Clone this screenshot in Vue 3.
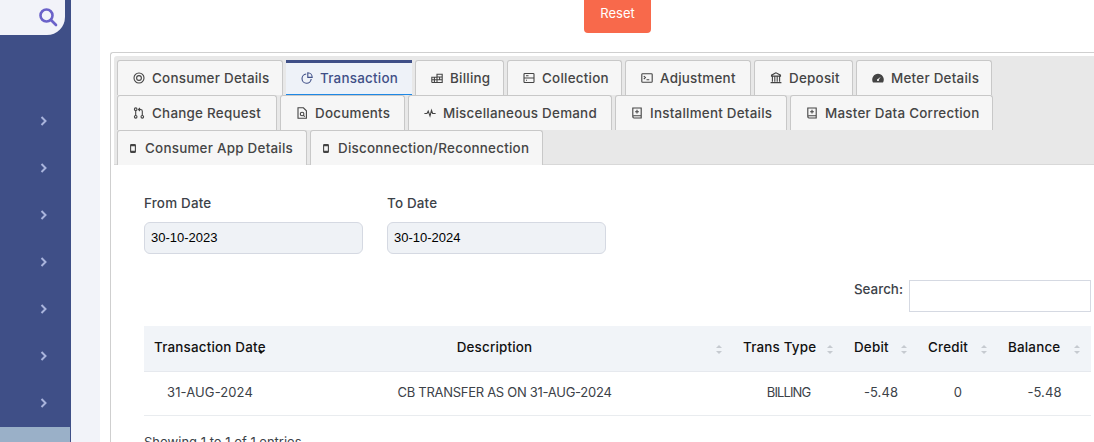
<script setup>
// tab rows, icon = key into the icons map below
const icons = {
  at: '<circle cx="6" cy="6" r="5"/><circle cx="6" cy="6" r="2.4"/>',
  pie: '<path d="M5.2 2a4.6 4.6 0 1 0 5 5"/><path d="M6.8 .8a4.6 4.6 0 0 1 4.4 4.6H6.8z"/>',
  chart: '<path d="M.8 10.5h10.4V2.2H6v8.3M.8 10.5V5.2H6M.8 7.8H6M3.4 5.2v5.3M6 5h5.2M6 7.8h5.2M8.6 5v2.8"/>',
  card: '<rect x="1" y="1.5" width="10" height="9" rx=".8"/><path d="M1 6h10M3 3.8h2.5M3 8.2h1"/>',
  term: '<rect x=".8" y="1.8" width="10.4" height="8.4" rx=".8"/><path d="M2.8 4.2l1.6 1.4-1.6 1.4M5.5 7.8h2.8"/>',
  bank: '<path d="M6 .8L1.5 3.2v.9h9v-.9zM2.4 4.2v5.6M4.8 4.2v5.6M7.2 4.2v5.6M9.6 4.2v5.6M.6 10.6h10.8"/>',
  gauge: '<path class="solid" d="M6 1.8a5.8 5.8 0 0 0-5.3 8.1c.2.4.5.6.9.6h8.8c.4 0 .7-.2.9-.6A5.8 5.8 0 0 0 6 1.8zm2.8 3L6.9 7.6a1 1 0 1 1-1-.6z"/>',
  pull: '<circle cx="2.7" cy="2.2" r="1.3"/><circle cx="2.7" cy="9.8" r="1.3"/><circle cx="9.3" cy="9.8" r="1.3"/><path d="M2.7 3.5v5M9.3 8.5V4.2c0-1-.6-1.7-1.7-1.7H6M7 1L5.5 2.5 7 4"/>',
  file: '<path d="M2 .8h5.4L10.4 3.8V11.2H2z"/><circle cx="6.1" cy="7" r="1.8"/><path d="M7.4 8.3L8.8 9.7"/>',
  wave: '<path d="M.4 6.5h2.6l1.2-2.4L6 9l1.5-5.6 1.1 3.1h3"/>',
  book: '<path d="M1.8 9.4V1h8.4v10H3A1.2 1.2 0 0 1 1.8 9.8c0-.7.5-1.1 1.2-1.1h7.2M6 2.8v3.8M4.1 4.7h3.8"/>',
  phone: '<rect x="3.6" y="2.5" width="4.8" height="8" rx=".8"/><path class="thick" d="M3.6 9.4h4.8M3.6 3.5h4.8"/>'
}

const tabRows = [
  { label: 'Consumer Details', icon: 'at', w: 166 },
  { label: 'Transaction', icon: 'pie', w: 126, active: true },
  { label: 'Billing', icon: 'chart', w: 89 },
  { label: 'Collection', icon: 'card', w: 115 },
  { label: 'Adjustment', icon: 'term', w: 126 },
  { label: 'Deposit', icon: 'bank', w: 99 },
  { label: 'Meter Details', icon: 'gauge', w: 136 },
  { label: 'Change Request', icon: 'pull', w: 160 },
  { label: 'Documents', icon: 'file', w: 125 },
  { label: 'Miscellaneous Demand', icon: 'wave', w: 204 },
  { label: 'Installment Details', icon: 'book', w: 172 },
  { label: 'Master Data Correction', icon: 'book', w: 203 },
  { label: 'Consumer App Details', icon: 'phone', w: 190, tight: true },
  { label: 'Disconnection/Reconnection', icon: 'phone', w: 233, tight: true }
]

const sideItems = 7

const columns = [
  { label: 'Transaction Date', cls: 'c-date', sort: 'down' },
  { label: 'Description', cls: 'c-desc' },
  { label: 'Trans Type', cls: 'c-type' },
  { label: 'Debit', cls: 'c-num1' },
  { label: 'Credit', cls: 'c-num2' },
  { label: 'Balance', cls: 'c-num3' }
]

const rows = [
  ['31-AUG-2024', 'CB TRANSFER AS ON 31-AUG-2024', 'BILLING', '-5.48', '0', '-5.48']
]
</script>

<template>
  <div class="page">
    <aside class="sidebar">
      <div class="search-pill">
        <svg width="20" height="20" viewBox="0 0 20 20" fill="none" stroke="#6b62c9" stroke-width="2.6">
          <circle cx="8.5" cy="8.5" r="6" />
          <path d="M13 13l5 5" stroke-linecap="round" />
        </svg>
      </div>
      <ul class="side-list">
        <li v-for="n in sideItems" :key="n" class="side-item">
          <svg width="8" height="10" viewBox="0 0 8 10" fill="none" stroke="#a9b4dc" stroke-width="2">
            <path d="M1.5 1l4 4-4 4" />
          </svg>
        </li>
      </ul>
      <div class="side-active"></div>
    </aside>
    <div class="gutter"></div>

    <main class="main">
      <div class="actions">
        <button class="reset-btn">Reset</button>
      </div>

      <section class="panel">
        <div class="tabs">
          <a
            v-for="tab in tabRows"
            :key="tab.label"
            class="tab"
            :class="{ active: tab.active, tight: tab.tight }"
            :style="{ width: tab.w + 'px' }"
          >
            <svg class="tab-icon" width="12" height="12" viewBox="0 0 12 12" fill="none" v-html="icons[tab.icon]"></svg>
            <span class="tab-label">{{ tab.label }}</span>
          </a>
        </div>

        <div class="tab-body">
          <div class="dates">
            <label class="field">
              <span>From Date</span>
              <input type="text" value="30-10-2023" readonly />
            </label>
            <label class="field">
              <span>To Date</span>
              <input type="text" value="30-10-2024" readonly />
            </label>
          </div>

          <div class="search-row">
            <label for="tbl-search">Search:</label>
            <input id="tbl-search" type="text" />
          </div>

          <table class="grid">
            <thead>
              <tr>
                <th v-for="col in columns" :key="col.label" :class="col.cls">
                  {{ col.label }}
                  <span class="sort" :class="col.sort"></span>
                </th>
              </tr>
            </thead>
            <tbody>
              <tr v-for="(row, i) in rows" :key="i">
                <td v-for="(cell, j) in row" :key="j">{{ cell }}</td>
              </tr>
            </tbody>
          </table>

          <div class="info">Showing 1 to 1 of 1 entries</div>
        </div>
      </section>
    </main>
  </div>
</template>

<style>
html,
body {
  margin: 0;
  overflow: hidden;
  background: #fff;
}
</style>

<style scoped>
.page {
  display: flex;
  width: 1094px;
  height: 442px;
  overflow: hidden;
  font-family: "Inter", "Liberation Sans", sans-serif;
  color: #3c4248;
}

.sidebar {
  flex: none;
  width: 71px;
  background: #3f4f87;
  display: flex;
  flex-direction: column;
}

.search-pill {
  flex: none;
  width: 65px;
  height: 35px;
  box-sizing: border-box;
  background: #f2f3f9;
  border-radius: 0 0 18px 0;
  display: flex;
  justify-content: flex-end;
  align-items: flex-start;
  padding: 7px 7px 0 0;
}

.side-list {
  flex: none;
  list-style: none;
  margin: 0;
  padding: 81px 0 0;
}

.side-item {
  height: 47px;
  display: flex;
  align-items: flex-start;
  padding: 0 0 0 40px;
}

.side-active {
  flex: none;
  margin-top: -18px;
  width: 70px;
  height: 30px;
  background: #9ab0c8;
}

.gutter {
  flex: none;
  width: 29px;
  background: #f2f3f9;
}

.main {
  flex: none;
  width: 1025px;
  padding-left: 10px;
  box-sizing: border-box;
}

.actions {
  display: flex;
  justify-content: center;
  height: 52px;
}

.reset-btn {
  width: 67px;
  height: 41px;
  margin-top: -8px;
  border: none;
  border-radius: 4px;
  background: #f8694b;
  color: #fff;
  font: 13px "Inter", "Liberation Sans", sans-serif;
}

.panel {
  border: 1px solid #cfcfcf;
  border-right: none;
  border-radius: 3px 0 0 0;
  padding: 3px;
  height: 500px;
  box-sizing: border-box;
}

.tabs {
  display: flex;
  flex-wrap: wrap;
  align-content: flex-start;
  column-gap: 3px;
  height: 109px;
  box-sizing: border-box;
  padding: 4px 0 0 3px;
  background: #e8e8e8;
  border-bottom: 1px solid #d8d8d8;
  border-radius: 3px 0 0 0;
}

.tab {
  box-sizing: border-box;
  height: 35px;
  display: flex;
  align-items: center;
  padding-left: 15px;
  background: #f6f6f6;
  border: 1px solid #c8c8c8;
  border-bottom: none;
  border-radius: 3px 3px 0 0;
  font-size: 13.4px;
  font-weight: 500;
  letter-spacing: 0.25px;
  color: #454545;
  white-space: nowrap;
}

.tab.tight {
  padding-left: 9px;
}

.tab.active {
  background: #eef2f8;
  border: none;
  border-top: 3px solid #3f4f87;
  border-bottom: 1px solid #1e88e5;
  border-radius: 0;
  color: #3f4f87;
  padding: 0 0 2px 15px;
}

.tab-icon {
  flex: none;
  margin-right: 7px;
  stroke: #444;
  stroke-width: 1.1;
}

.tab.tight .tab-icon {
  margin-right: 6px;
}

.tab.active .tab-icon {
  stroke: #3f4f87;
}

.tab-icon :deep(.solid) {
  fill: #444;
  stroke: none;
}

.tab-icon :deep(.thick) {
  stroke-width: 1.4;
}

.tab-body {
  padding: 29px 0 0 30px;
  width: 947px;
  font-size: 13.4px;
}

.dates {
  display: flex;
  gap: 24px;
}

.field {
  display: flex;
  flex-direction: column;
  gap: 9px;
  font-weight: 500;
  line-height: 19px;
  letter-spacing: 0.2px;
  color: #3c4248;
}

.field input {
  box-sizing: border-box;
  width: 219px;
  height: 32px;
  padding: 0 6px 2px;
  border: 1px solid #d5d9e2;
  border-radius: 6px;
  background: #eff2f6;
  color: #000;
  font: 13px "Liberation Sans", sans-serif;
  outline: none;
}

.search-row {
  display: flex;
  justify-content: flex-end;
  gap: 6px;
  margin-top: 26px;
  font-weight: 500;
}

.search-row label {
  line-height: 19px;
}

.search-row input {
  box-sizing: border-box;
  width: 182px;
  height: 32px;
  border: 1px solid #d5d9e2;
  outline: none;
}

.grid {
  width: 947px;
  margin-top: 14px;
  table-layout: fixed;
  border-collapse: collapse;
}

.grid th {
  position: relative;
  box-sizing: border-box;
  height: 45px;
  padding: 0 10px 2px;
  background: #f1f4f8;
  border-bottom: 1px solid #e6e9ee;
  color: #111;
  font-size: 13.4px;
  font-weight: 500;
  letter-spacing: 0.2px;
  text-align: left;
  white-space: nowrap;
}

.grid td {
  box-sizing: border-box;
  height: 44px;
  padding: 0 10px 2px;
  border-bottom: 1px solid #e9ecef;
  text-align: center;
  font-size: 13px;
  letter-spacing: 0.1px;
  color: #3c4248;
  white-space: nowrap;
}

.grid td:nth-child(2) {
  letter-spacing: -0.28px;
}

.grid td:nth-child(3) {
  letter-spacing: -0.9px;
}

.c-date { width: 132px; }
.c-type { width: 111px; }
.c-num1 { width: 74px; }
.c-num2 { width: 80px; }
.c-num3 { width: 93px; }

.grid th.c-desc {
  text-align: center;
  padding-right: 30px;
}

.sort {
  position: absolute;
  right: 14px;
  top: 19px;
  width: 0;
  height: 9px;
}

.sort::before,
.sort::after {
  content: "";
  position: absolute;
  left: -3px;
  border-left: 3px solid transparent;
  border-right: 3px solid transparent;
}

.sort::before {
  top: 0;
  border-bottom: 3px solid #c6cad0;
}

.sort::after {
  top: 6px;
  border-top: 3px solid #c6cad0;
}

.sort.down {
  right: 15px;
}

.sort.down::before {
  border-bottom-color: transparent;
}

.sort.down::after {
  border-top-color: #111;
}

.info {
  margin-top: 18px;
  font-size: 13px;
}
</style>
